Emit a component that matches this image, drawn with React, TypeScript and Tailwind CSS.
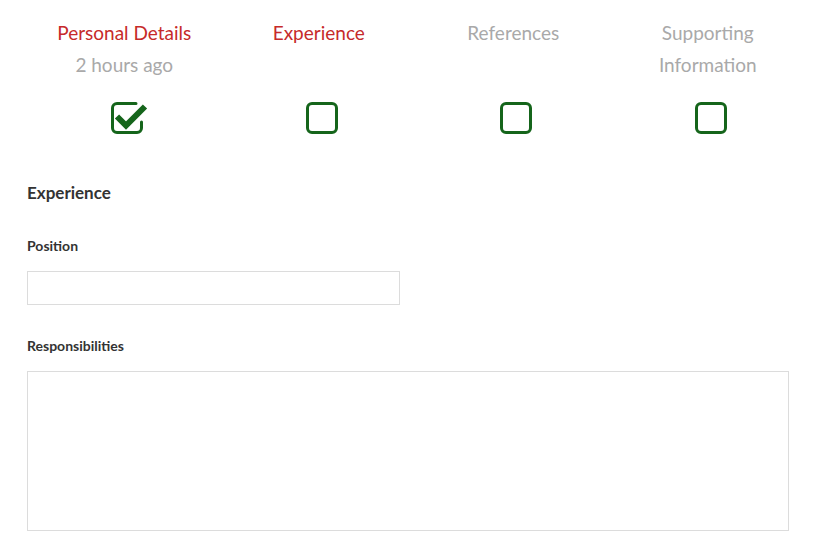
import React from "react"

const steps = [
  { name: "Personal Details", sub: "2 hours ago", active: true, done: true },
  { name: "Experience", sub: "", active: true, done: false },
  { name: "References", sub: "", active: false, done: false },
  { name: "Supporting Information", sub: "", active: false, done: false },
]

function Box({ checked }: { checked: boolean }) {
  return (
    <svg width="40" height="34" viewBox="0 0 40 34" fill="none">
      {checked ? (
        <>
          <path
            d="M26 2.5H7a4.5 4.5 0 0 0-4.5 4.5v20a4.5 4.5 0 0 0 4.5 4.5h20a4.5 4.5 0 0 0 4.5-4.5v-6"
            stroke="#15651b"
            strokeWidth="3"
            strokeLinecap="round"
          />
          <path d="M7 15.5l9 9 19-19" stroke="#15651b" strokeWidth="6" strokeLinejoin="miter" />
        </>
      ) : (
        <rect x="2.5" y="2.5" width="29" height="29" rx="4.5" stroke="#15651b" strokeWidth="3" />
      )}
    </svg>
  )
}

export default function App() {
  return (
    <div className="bg-white min-h-screen px-[27px] pt-[17px]" style={{ fontFamily: "Lato, 'Open Sans', sans-serif" }}>
      {/* steps */}
      <div className="grid grid-cols-4 w-[778px]">
        {steps.map((s) => (
          <div key={s.name} className="flex flex-col items-center">
            <div className="h-[64px] text-center text-[19px] leading-[32px] px-4">
              <div className={s.active ? "text-[#c62a2a]" : "text-[#a9a9a9]"}>{s.name}</div>
              {s.sub && <div className="text-[#a9a9a9]">{s.sub}</div>}
            </div>
            <div className="mt-[20px] pl-[12px]">
              <Box checked={s.done} />
            </div>
          </div>
        ))}
      </div>

      <h2 className="mt-[47px] text-[17px] font-bold text-[#333] leading-[22px]">Experience</h2>

      <label className="block mt-[33px] text-[14px] font-bold text-[#333] leading-[18px]">Position</label>
      <input className="block mt-[16px] w-[373px] h-[34px] border border-[#dcdcdc] outline-none" />

      <label className="block mt-[32px] text-[14px] font-bold text-[#333] leading-[18px]">Responsibilities</label>
      <textarea className="block mt-[16px] w-[762px] h-[160px] border border-[#dcdcdc] outline-none resize-none" />
    </div>
  )
}
